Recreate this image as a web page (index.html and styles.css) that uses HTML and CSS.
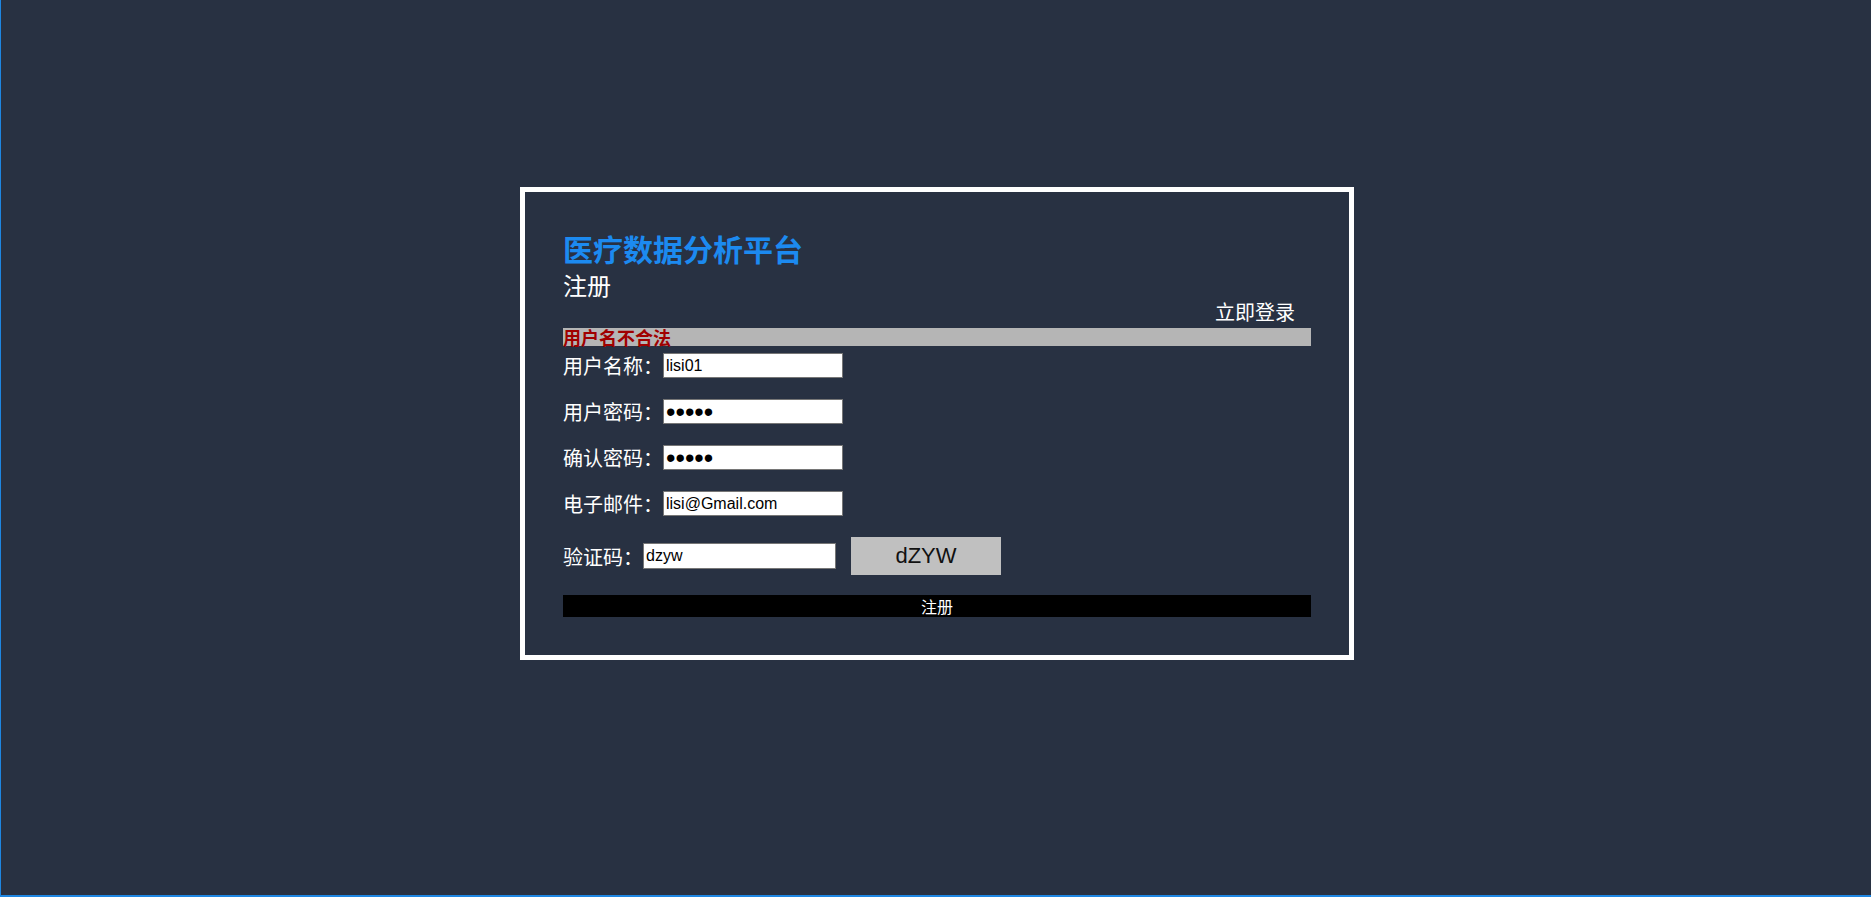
FILE: index.html
```html
<!DOCTYPE html>
<html lang="zh-CN">
<head>
<meta charset="utf-8">
<title>注册 - 医疗数据分析平台</title>
<link rel="stylesheet" href="styles.css">
</head>
<body>
<div class="page">
  <div class="card">
    <h1 class="title">医疗数据分析平台</h1>
    <div class="subhead">
      <h2 class="subtitle">注册</h2>
      <a class="login-link" href="#">立即登录</a>
    </div>
    <div class="error">用户名不合法</div>
    <form class="form">
      <div class="row">
        <label class="label">用户名称：</label>
        <input class="field" type="text" value="lisi01">
      </div>
      <div class="row">
        <label class="label">用户密码：</label>
        <input class="field pwd" type="password" value="12345">
      </div>
      <div class="row">
        <label class="label">确认密码：</label>
        <input class="field pwd" type="password" value="12345">
      </div>
      <div class="row">
        <label class="label">电子邮件：</label>
        <input class="field" type="text" value="lisi@Gmail.com">
      </div>
      <div class="row captcha-row">
        <label class="label">验证码：</label>
        <input class="field captcha-field" type="text" value="dzyw">
        <div class="captcha">dZYW</div>
      </div>
      <button class="submit" type="button">注册</button>
    </form>
  </div>
</div>
</body>
</html>
```

FILE: styles.css
```css
html, body {
  margin: 0;
  padding: 0;
  background: #283142;
}

body {
  font-family: "Noto Sans CJK SC", "Liberation Sans", sans-serif;
  color: #ffffff;
}

.page {
  box-sizing: border-box;
  height: 897px;
  border-left: 1px solid #1e86e2;
  border-bottom: 2px solid #1e86e2;
  padding-top: 187px;
  padding-left: 2px;
  display: flex;
  justify-content: center;
  align-items: flex-start;
}

.card {
  box-sizing: border-box;
  width: 834px;
  border: 5px solid #ffffff;
  padding: 38px 38px 38px;
  display: flex;
  flex-direction: column;
}

.title {
  margin: 0;
  font-size: 30px;
  line-height: 36px;
  font-weight: 700;
  color: #1c8af0;
}

.subhead {
  display: flex;
  justify-content: space-between;
  align-items: flex-start;
  margin-top: 4px;
}

.subtitle {
  margin: 0;
  font-size: 24px;
  line-height: 30px;
  font-weight: 400;
  color: #ffffff;
}

.login-link {
  margin-top: 30px;
  margin-right: 16px;
  font-size: 20px;
  line-height: 24px;
  color: #ffffff;
  text-decoration: none;
}

.error {
  margin-top: 4px;
  height: 18px;
  line-height: 18px;
  font-size: 18px;
  font-weight: 700;
  color: #a00000;
  background: #b5b5b5;
}

.form {
  margin: 7px 0 0;
  display: flex;
  flex-direction: column;
  gap: 21px;
}

.row {
  display: flex;
  align-items: center;
}

.label {
  font-size: 20px;
  line-height: 25px;
  color: #ffffff;
  white-space: nowrap;
}

.field {
  box-sizing: border-box;
  width: 180px;
  height: 25px;
  margin: 0;
  padding: 0 2px;
  border: 1px solid #767676;
  background: #ffffff;
  color: #000000;
  font-family: "Liberation Sans", sans-serif;
  font-size: 16px;
  outline: none;
}

.pwd {
  font-size: 27px;
  padding-top: 2px;
}

.captcha-field {
  width: 193px;
  height: 26px;
}

.captcha {
  margin-left: 15px;
  width: 150px;
  height: 38px;
  line-height: 38px;
  text-align: center;
  background: #c0c0c0;
  color: #111111;
  font-family: "Liberation Sans", sans-serif;
  font-size: 22px;
}

.submit {
  margin-top: -1px;
  height: 22px;
  padding: 0;
  border: none;
  background: #000000;
  color: #ffffff;
  font-family: "Noto Sans CJK SC", sans-serif;
  font-size: 16px;
  line-height: 22px;
  cursor: pointer;
}
```
